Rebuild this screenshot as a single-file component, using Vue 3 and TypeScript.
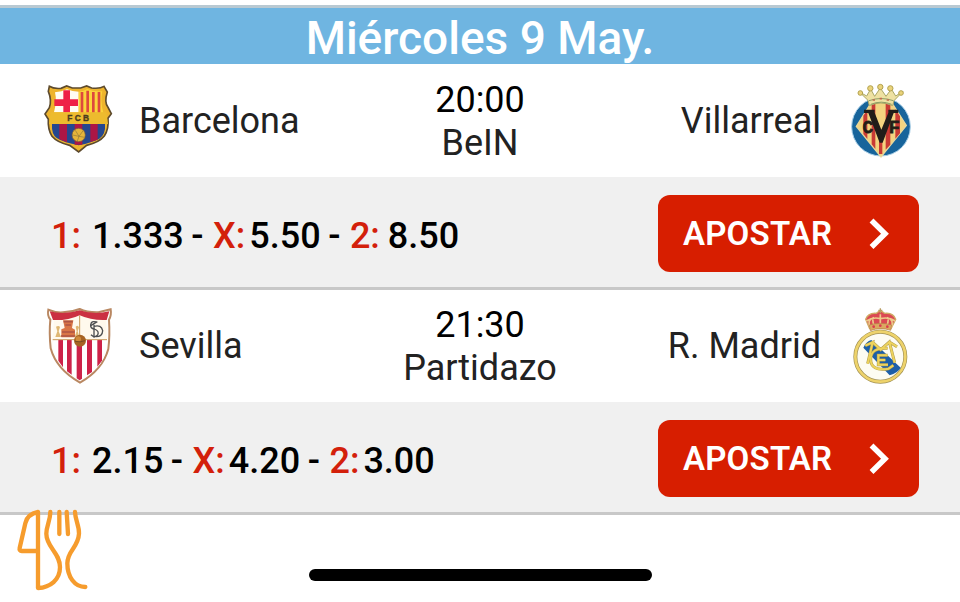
<template>
  <div class="screen">
    <header class="day">Miércoles 9 May.</header>

    <main class="matches">
      <section v-for="match in matches" :key="match.home" class="match">
        <div class="match__row">
          <div class="match__team">
            <svg v-if="match.home === 'Barcelona'" class="crest" viewBox="0 0 270 270">
              <path d="M43 34Q56 42 78 40L95 33L112 39H137L155 33L170 39Q195 42 207 34L217 51Q207 82 219 97L229 116L219 130Q222 162 208 183Q193 202 155 211L131 231L104 211Q67 203 51 184Q38 163 40 133L30 117L43 98Q51 76 40 49Z" fill="#eeb42d" stroke="#5d4a2d" stroke-width="5" />
              <path d="M60 52Q80 50 96 43Q112 50 131 50V112H57Q66 76 60 52Z" fill="#fffdf3" />
              <path d="M85 46H105V112H85ZM58 73H129V93H58Z" fill="#ee2147" />
              <path d="M131 50Q147 49 157 42Q174 51 202 49Q195 78 205 113H131Z" fill="#fbd43b" />
              <path d="M141 51V113M158 47V113M175 51V113M192 51V113" stroke="#de483d" stroke-width="8" />
              <path d="M47 112H214L219 147H42Z" fill="#edbb2e" />
              <path d="M51 147H210Q213 178 193 191Q172 202 131 211Q88 203 65 189Q49 178 51 147Z" fill="#25478f" />
              <path d="M73 147H96V202L73 193ZM119 147H142V209H119ZM166 147H188V194L166 201Z" fill="#ac1646" />
              <circle cx="131" cy="180" r="20" fill="#e6b53b" stroke="#765a35" stroke-width="2" />
              <path d="M113 180L132 184L145 166M132 184L127 198M121 166L132 184L149 187" fill="none" stroke="#8f783b" stroke-width="2" />
              <text x="133" y="138" text-anchor="middle" class="crest__fcb">FCB</text>
            </svg>
            <svg v-else class="crest" viewBox="0 0 270 270">
              <path d="M40 29Q63 39 84 37Q112 36 134 27Q157 38 190 37L227 28Q230 45 222 59Q225 107 220 147Q203 209 135 248Q64 208 47 145Q42 98 46 59Q36 46 40 29Z" fill="#fffdf8" stroke="#b98862" stroke-width="6" />
              <path d="M44 34Q86 46 134 31Q178 46 223 34L215 60H54Z" fill="#cb3042" />
              <path d="M57 61Q100 62 134 46Q170 62 213 60L215 118H53Z" fill="#fff9ed" />
              <path d="M54 118H215Q217 160 197 190Q173 222 135 241Q89 216 67 180Q52 155 54 118Z" fill="#fff" />
              <path d="M70 120H84V202L70 182ZM96 120H110V224L96 214ZM125 120H141V236L134 241L125 235ZM156 120H171V216L156 226ZM187 120H201V182L187 200Z" fill="#cd2148" />
              <path d="M53 119H216M134 46V118" stroke="#c89a5c" stroke-width="3" />
              <path d="M84 61H115L111 84L120 89V112H79V88L89 84Z" fill="#d97545" />
              <path d="M86 65H113M91 75H108M81 96H119M78 108H120" stroke="#ad5444" stroke-width="5" />
              <path d="M63 80Q71 75 75 81L71 94L78 111H61L67 94ZM122 80Q129 74 132 82L128 94L133 110H119L125 94Z" fill="#dfb773" />
              <g fill="none" stroke="#4c4e50" stroke-width="4">
                <path d="M183 66Q169 61 167 75Q166 85 178 87Q194 93 188 105Q179 115 168 104" />
                <path d="M177 74V113M177 79Q199 73 203 92Q202 111 181 110M167 77L187 65" />
              </g>
              <circle cx="135" cy="122" r="18" fill="#a76323" />
              <circle cx="130" cy="117" r="8" fill="#cf8b3b" />
              <path d="M120 124Q136 128 150 122" fill="none" stroke="#774d23" stroke-width="3" />
            </svg>
            <span class="match__name">{{ match.home }}</span>
          </div>

          <div class="match__info">
            <span class="match__time">{{ match.time }}</span>
            <span>{{ match.channel }}</span>
          </div>

          <div class="match__team match__team--away">
            <span class="match__name">{{ match.away }}</span>
            <svg v-if="match.away === 'Villarreal'" class="crest crest--away" viewBox="0 0 240 270">
              <circle cx="123" cy="155" r="88" fill="#17649b" stroke="#a9cfe7" stroke-width="3" />
              <path d="M123 69Q151 69 160 90L199 151L123 246L49 154L89 90Q100 69 123 69Z" fill="#f3d480" stroke="#e8d79b" stroke-width="4" />
              <path d="M95 89L106 77V222L95 208ZM137 76L151 84V209L137 224ZM117 165H127V237H117ZM70 122L82 104V192L70 177ZM166 103L180 124V175L166 191Z" fill="#c93b35" />
              <path d="M72 104H104V113L124 164L145 113V104H175V114H161L128 203H119L85 114H72Z" fill="#211d19" />
              <text x="68" y="173" textLength="30" lengthAdjust="spacingAndGlyphs" class="crest__cf">C</text>
              <text x="148" y="173" textLength="30" lengthAdjust="spacingAndGlyphs" class="crest__cf">F</text>
              <path d="M84 76L57 50L80 63L92 42L104 64L121 39L138 64L154 42L167 63L189 49L162 77L158 92Q122 76 88 92Z" fill="#eee1a2" stroke="#aaa766" stroke-width="3" />
              <path d="M87 77Q123 64 160 77M92 88Q124 75 155 88" fill="none" stroke="#8e9e65" stroke-width="3" />
              <g fill="#ead37b" stroke="#b3a24f" stroke-width="3">
                <circle cx="61" cy="54" r="7" /><circle cx="91" cy="40" r="8" />
                <circle cx="121" cy="36" r="8" /><circle cx="151" cy="40" r="8" />
                <circle cx="183" cy="54" r="7" />
              </g>
              <path d="M98 75H105M119 71H126M140 75H147" stroke="#c26a50" stroke-width="5" />
            </svg>
            <svg v-else class="crest crest--away" viewBox="0 0 240 270">
              <path d="M89 86L77 58Q84 38 109 40L121 31L134 40Q160 37 167 58L153 86Z" fill="#db4a53" stroke="#cfaa64" stroke-width="4" />
              <path d="M91 83Q80 60 99 54Q96 68 107 83M154 83Q163 60 144 54Q147 68 136 83M121 43V83M79 63Q99 50 121 56Q147 50 165 63" fill="none" stroke="#edca8a" stroke-width="5" />
              <path d="M88 75Q121 65 155 75L152 91Q121 80 91 92Z" fill="#dca861" stroke="#b57e47" stroke-width="2" />
              <path d="M121 25V40M115 31H127" stroke="#b99c62" stroke-width="4" />
              <g fill="#db3b4e"><circle cx="101" cy="80" r="4" /><circle cx="121" cy="77" r="4" /><circle cx="142" cy="80" r="4" /></g>
              <circle cx="121" cy="170" r="75" fill="#fdfcf2" stroke="#a29255" stroke-width="12" />
              <circle cx="121" cy="170" r="75" fill="none" stroke="#eed36b" stroke-width="8" />
              <path d="M70 143Q78 125 94 120L182 203Q173 219 149 226Z" fill="#1c5fa8" />
              <g fill="none" stroke="#b09c4c" stroke-width="9">
                <path d="M83 191L98 127L76 137M98 127L122 149L148 126L164 188M148 126L171 140" />
                <path d="M143 145Q93 142 92 177Q92 215 146 206L160 196M143 166H115V194H144M116 180H136" />
              </g>
              <g fill="none" stroke="#edd35c" stroke-width="6">
                <path d="M83 191L98 127L76 137M98 127L122 149L148 126L164 188M148 126L171 140" />
                <path d="M143 145Q93 142 92 177Q92 215 146 206L160 196M143 166H115V194H144M116 180H136" />
              </g>
            </svg>
          </div>
        </div>

        <div class="bets">
          <p class="bets__odds">
            <span class="bets__label">1:</span>
            <span class="bets__value bets__value--home">{{ match.odds[0] }}</span>
            <span class="bets__dash">-</span>
            <span class="bets__label">X:</span>
            <span class="bets__value">{{ match.odds[1] }}</span>
            <span class="bets__dash">-</span>
            <span class="bets__label">2:</span>
            <span class="bets__value" :class="{ 'bets__value--spaced': match.odds[2] === '8.50' }">{{ match.odds[2] }}</span>
          </p>
          <button type="button" class="bets__btn">
            <span>APOSTAR</span>
            <svg class="bets__arrow" viewBox="0 0 20 32">
              <path d="M2.5 2.5L16 15.7L2.5 29" fill="none" stroke="#fff" stroke-width="5.5" />
            </svg>
          </button>
        </div>
      </section>
    </main>

    <svg class="watermark" viewBox="0 0 330 306">
      <g fill="none" stroke="#f69c2d" stroke-width="13" stroke-linecap="round" stroke-linejoin="round">
        <path d="M114 153H66Q57 152 59 144L76 70Q82 42 114 36V264C151 262 180 239 180 202C180 157 139 142 139 101C139 77 151 62 151 36" />
        <path d="M178 36V102M200 36L204 102M225 36C226 62 238 77 237 101C235 143 202 151 202 190C202 231 224 261 256 261" />
      </g>
    </svg>
    <div class="home-indicator"></div>
  </div>
</template>

<script setup lang="ts">
interface Match {
  home: string
  away: string
  time: string
  channel: string
  odds: [string, string, string]
}

const matches: Match[] = [
  {
    home: 'Barcelona',
    away: 'Villarreal',
    time: '20:00',
    channel: 'BeIN',
    odds: ['1.333', '5.50', '8.50'],
  },
  {
    home: 'Sevilla',
    away: 'R. Madrid',
    time: '21:30',
    channel: 'Partidazo',
    odds: ['2.15', '4.20', '3.00'],
  },
]
</script>

<style>
body {
  margin: 0;
  background: #fff;
}
</style>

<style scoped>
.screen {
  position: relative;
  display: flex;
  flex-direction: column;
  box-sizing: border-box;
  width: 960px;
  height: 602px;
  padding-top: 5px;
  overflow: hidden;
  background: #fff;
  color: #222;
  font-family: Roboto, "Liberation Sans", sans-serif;
}

.day {
  box-sizing: border-box;
  height: 59px;
  padding-top: 2px;
  border-top: 3px solid #b9c9d2;
  background: #6fb5e1;
  color: #fff;
  font-size: 46px;
  font-weight: 500;
  line-height: 57px;
  text-align: center;
}

.matches {
  margin-top: 1px;
}

.match__row {
  display: grid;
  grid-template-columns: 1fr 200px 1fr;
  align-items: center;
  height: 112px;
  padding: 0 40px 0 35px;
}

.match__team {
  display: flex;
  align-items: center;
  padding-bottom: 2px;
}

.match__team--away {
  justify-content: flex-end;
}

.match__name {
  margin-left: 14px;
  padding-top: 2px;
  font-size: 36px;
  line-height: 42px;
  white-space: nowrap;
}

.match__team--away .match__name {
  margin: 0 19px 0 0;
}

.match__info {
  display: flex;
  flex-direction: column;
  align-items: center;
  margin-left: 5px;
  padding-top: 1px;
  font-size: 36px;
  line-height: 43px;
}

.match__time {
  color: #000;
}

.crest {
  flex: none;
  width: 90px;
  height: 90px;
}

.crest--away {
  width: 80px;
}

.crest__fcb {
  fill: #4a3b20;
  stroke: #4a3b20;
  stroke-width: 1px;
  font: bold 25px "Liberation Sans", sans-serif;
  letter-spacing: 7px;
}

.crest__cf {
  fill: #241e17;
  stroke: #241e17;
  stroke-width: 3px;
  font: bold 50px "Liberation Sans", sans-serif;
}

.bets {
  display: flex;
  align-items: center;
  justify-content: space-between;
  height: 110px;
  padding: 0 41px 0 51px;
  border-bottom: 3px solid #c8c8c8;
  background: #f0f0f0;
}

.bets__odds {
  display: flex;
  margin: 8px 0 0;
  color: #000;
  font-size: 36px;
  font-weight: 500;
  line-height: 42px;
}

.bets__label {
  color: #d3200b;
}

.bets__value {
  margin-left: 4px;
}

.bets__value--home {
  margin-left: 11px;
}

.bets__value--spaced {
  margin-left: 8px;
}

.bets__dash {
  margin: 0 9.5px 0 7.5px;
}

.bets__btn {
  display: flex;
  align-items: center;
  justify-content: space-between;
  box-sizing: border-box;
  width: 261px;
  height: 77px;
  margin-top: 3px;
  padding: 0 30px 0 25px;
  border: 0;
  border-radius: 12px;
  background: #d71e00;
  color: #fff;
  font-family: inherit;
  font-size: 33px;
  font-weight: 600;
  letter-spacing: 0.2px;
  cursor: pointer;
}

.bets__arrow {
  width: 20px;
  height: 32px;
}

.watermark {
  position: absolute;
  left: 0;
  top: 500px;
  width: 110px;
  height: 102px;
}

.home-indicator {
  width: 343px;
  height: 12px;
  margin: auto auto 21px 309px;
  border-radius: 6px;
  background: #000;
}
</style>
